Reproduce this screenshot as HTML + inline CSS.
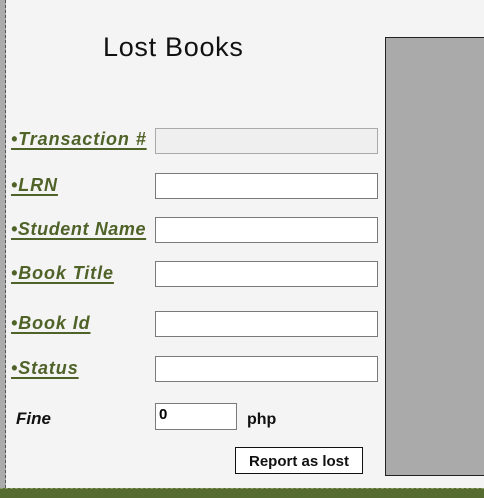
<html><head><style>
body{margin:0;width:484px;height:497px;background:#f4f4f4;position:relative;overflow:hidden;font-family:"Liberation Sans",sans-serif}
.strip{position:absolute;left:0;top:0;width:5px;height:488px;background:#ababab;border-right:1px dashed #555}
.t{position:absolute;left:103px;top:32px;font-size:27px;color:#111;letter-spacing:0.7px}
.l{position:absolute;left:11px;font-size:18px;font-weight:bold;font-style:italic;color:#4f6228;text-decoration:underline;text-decoration-thickness:2px;text-underline-offset:3px;letter-spacing:0.9px}
.i{position:absolute;left:155px;width:221px;height:24px;border:1px solid #7a7a7a;background:#fff}
.g{position:absolute;left:385px;top:37px;width:110px;height:437px;background:#aaa;border:1px solid #222}
.b{position:absolute;left:0;top:488px;width:484px;height:9px;background:#566b30;border-top:1px dashed #8a9a60}
</style></head><body>
<div class="strip"></div>
<div class="t">Lost Books</div>
<div class="g"></div>
<div class="l" style="top:129px">•Transaction #</div>
<div class="i" style="top:128px;background:#efefef;border-color:#aaa"></div>
<div class="l" style="top:175px">•LRN</div>
<div class="i" style="top:173px"></div>
<div class="l" style="top:219px;letter-spacing:0.6px">•Student Name</div>
<div class="i" style="top:217px"></div>
<div class="l" style="top:263px">•Book Title</div>
<div class="i" style="top:261px"></div>
<div class="l" style="top:313px">•Book Id</div>
<div class="i" style="top:311px"></div>
<div class="l" style="top:358px">•Status</div>
<div class="i" style="top:356px"></div>
<div style="position:absolute;left:16px;top:409px;font-size:17px;font-weight:bold;font-style:italic;color:#111">Fine</div>
<div style="position:absolute;left:155px;top:403px;border:1px solid #7a7a7a;background:#fff;font-size:15px;font-weight:bold;padding-left:3px;box-sizing:border-box;width:82px;height:27px;line-height:22px">0</div>
<div style="position:absolute;left:247px;top:411px;font-size:16px;font-weight:bold;color:#111">php</div>
<div style="position:absolute;left:235px;top:447px;width:126px;height:25px;border:1px solid #111;background:#fff;font-size:15px;font-weight:bold;text-align:center;line-height:27px;color:#111">Report as lost</div>
<div class="b"></div>
</body></html>
